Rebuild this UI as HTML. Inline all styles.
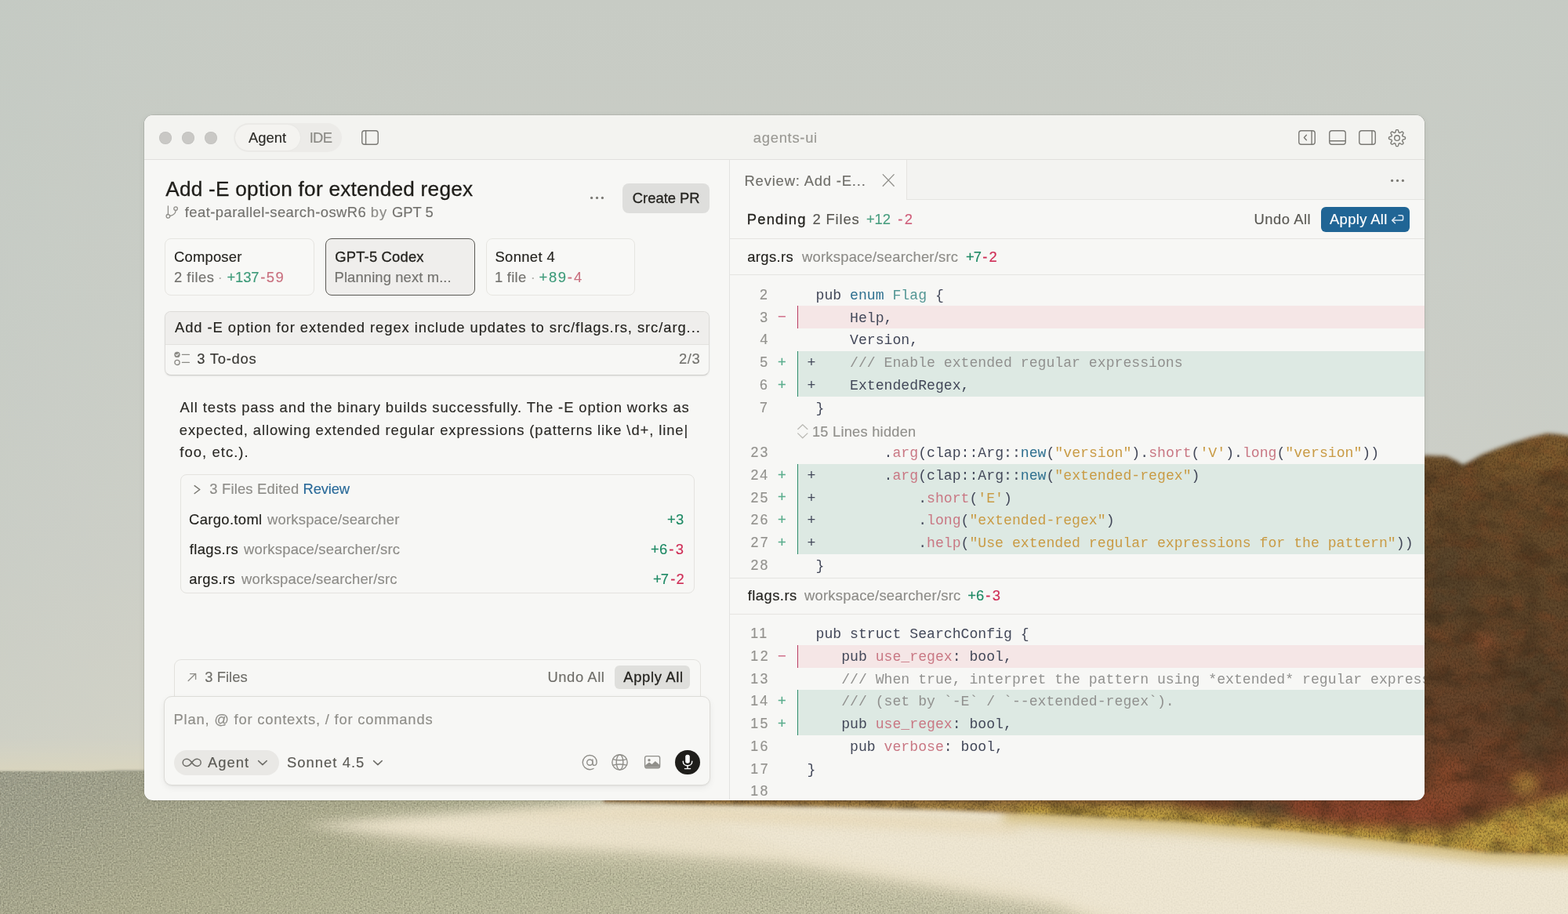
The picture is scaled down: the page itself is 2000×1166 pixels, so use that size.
<!DOCTYPE html>
<html lang="en">
<head>
<meta charset="utf-8">
<title>agents-ui</title>
<style>
html,body{margin:0;padding:0;}
body{width:2000px;height:1166px;overflow:hidden;position:relative;background:#cbcec7;font-family:'Liberation Sans', sans-serif;}
.bg{position:absolute;left:0;top:0;}
.shadow{position:absolute;left:184px;top:147px;width:1633px;height:873.6px;border-radius:11px;background:#f7f7f5;box-shadow:0 0 0 0.6px rgba(40,40,30,.22),0 2px 10px rgba(40,40,30,.07);}
.win{position:absolute;left:0;top:0;width:2000px;height:1166px;clip-path:inset(147px 183px 145.4px 184px round 11px);}
.b{position:absolute;box-sizing:border-box;}
.t{position:absolute;white-space:pre;line-height:24px;font-family:'Liberation Sans', sans-serif;-webkit-text-stroke:0.15px currentColor;}
.md{-webkit-text-stroke:0.3px currentColor;}
.ic{position:absolute;overflow:visible;}
.cl{position:absolute;left:0;width:2000px;height:28.75px;}
.cl pre{position:absolute;margin:0;top:0;font-family:'Liberation Mono', monospace;font-size:18.15px;line-height:28.75px;white-space:pre;color:#434859;}
.d{color:#434859;} .k{color:#2f7090;} .y{color:#539694;} .p{color:#c97884;} .s{color:#c99b45;} .c{color:#91918f;}
.add{background:#dde9e3;} .del{background:#f5e6e6;}
</style>
</head>
<body>


<svg class="bg" width="2000" height="1166" viewBox="0 0 2000 1166" aria-hidden="true">
  <defs>
    <linearGradient id="sky" x1="0" y1="0" x2="0" y2="1">
      <stop offset="0" stop-color="#c7cbc4"/>
      <stop offset="0.35" stop-color="#cbcec7"/>
      <stop offset="0.6" stop-color="#cfd0c8"/>
      <stop offset="0.78" stop-color="#d4d3c7"/>
      <stop offset="0.85" stop-color="#d8d5c6"/>
    </linearGradient>
    <linearGradient id="skyx" x1="0" y1="0" x2="1" y2="0">
      <stop offset="0" stop-color="#bfc8c2" stop-opacity="0.45"/>
      <stop offset="0.3" stop-color="#cdd0c8" stop-opacity="0"/>
      <stop offset="0.7" stop-color="#cdd0c8" stop-opacity="0"/>
      <stop offset="1" stop-color="#c3cac4" stop-opacity="0.4"/>
    </linearGradient>
    <linearGradient id="hz" x1="0" y1="0" x2="0" y2="1">
      <stop offset="0" stop-color="#d9d5c0" stop-opacity="0"/>
      <stop offset="1" stop-color="#dcd6bc" stop-opacity="0.8"/>
    </linearGradient>
    <linearGradient id="water" x1="0" y1="0" x2="1" y2="0.2">
      <stop offset="0" stop-color="#9c9e8e"/>
      <stop offset="0.1" stop-color="#a2a38f"/>
      <stop offset="0.25" stop-color="#b0af93"/>
      <stop offset="0.45" stop-color="#babA9d"/>
      <stop offset="0.7" stop-color="#c4c2a7"/>
      <stop offset="1" stop-color="#cdcab2"/>
    </linearGradient>
    <linearGradient id="fol" x1="0" y1="0" x2="0" y2="1">
      <stop offset="0" stop-color="#7d5c30"/>
      <stop offset="0.1" stop-color="#6c4f2c"/>
      <stop offset="0.4" stop-color="#5f472b"/>
      <stop offset="0.7" stop-color="#69442b"/>
      <stop offset="0.9" stop-color="#7b452c"/>
      <stop offset="1" stop-color="#84502f"/>
    </linearGradient>
    <filter color-interpolation-filters="sRGB" id="b1" x="-5%" y="-5%" width="110%" height="110%"><feGaussianBlur stdDeviation="0.8"/></filter>
    <filter color-interpolation-filters="sRGB" id="b3" x="-10%" y="-10%" width="120%" height="120%"><feGaussianBlur stdDeviation="2.5"/></filter>
    <filter color-interpolation-filters="sRGB" id="b8" x="-10%" y="-10%" width="120%" height="120%"><feGaussianBlur stdDeviation="7"/></filter>
    <filter color-interpolation-filters="sRGB" id="b16" x="-20%" y="-20%" width="140%" height="140%"><feGaussianBlur stdDeviation="14"/></filter>
    <filter color-interpolation-filters="sRGB" id="grain" x="0" y="0" width="100%" height="100%">
      <feTurbulence type="fractalNoise" baseFrequency="0.5" numOctaves="2" seed="7"/>
      <feColorMatrix type="matrix" values="0 0 0 0 0.3  0 0 0 0 0.29  0 0 0 0 0.22  1.2 1.2 0 0 -1.0"/>
    </filter>
    <filter color-interpolation-filters="sRGB" id="grain2" x="0" y="0" width="100%" height="100%">
      <feTurbulence type="fractalNoise" baseFrequency="0.5" numOctaves="2" seed="11"/>
      <feColorMatrix type="matrix" values="0 0 0 0 0.95  0 0 0 0 0.93  0 0 0 0 0.8  1.2 1.2 0 0 -1.05"/>
    </filter>
    <filter color-interpolation-filters="sRGB" id="blotch" x="0" y="0" width="100%" height="100%">
      <feTurbulence type="fractalNoise" baseFrequency="0.03 0.04" numOctaves="3" seed="3"/>
      <feColorMatrix type="matrix" values="0 0 0 0 0.2  0 0 0 0 0.15  0 0 0 0 0.09  1.9 1.9 0 0 -1.7"/>
    </filter>
    <filter color-interpolation-filters="sRGB" id="blotch2" x="0" y="0" width="100%" height="100%">
      <feTurbulence type="fractalNoise" baseFrequency="0.035 0.05" numOctaves="3" seed="21"/>
      <feColorMatrix type="matrix" values="0 0 0 0 0.6  0 0 0 0 0.27  0 0 0 0 0.13  0 1.9 1.9 0 -1.75"/>
    </filter>
    <filter color-interpolation-filters="sRGB" id="fgrain" x="0" y="0" width="100%" height="100%">
      <feTurbulence type="fractalNoise" baseFrequency="0.5 0.35" numOctaves="2" seed="5"/>
      <feColorMatrix type="matrix" values="0 0 0 0 0.2  0 0 0 0 0.13  0 0 0 0 0.07  1.4 1.4 0 0 -1.2"/>
    </filter>
    <mask id="folmask" maskUnits="userSpaceOnUse" x="700" y="500" width="1300" height="666"><g filter="url(#b3)"><path d="M1790 600 L1817 581 L1845 582 L1858 588 L1866 593 L1876 588 L1890 580 L1910 572 L1930 565 L1952 558 L1973 553 L1988 554 L2000 556 L2020 556 L2020 1092 L1900 1088 L1780 1074 L1650 1060 L1500 1048 L1350 1040 L1200 1033 L1050 1029 L900 1026 L770 1023 L770 1010 L1790 1010 Z" fill="#fff"/></g></mask>
    <clipPath id="folclip"><path d="M1790 600 L1817 581 L1845 582 L1858 588 L1866 593 L1876 588 L1890 580 L1910 572 L1930 565 L1952 558 L1973 553 L1988 554 L2000 556 L2020 556 L2020 1092 L1900 1088 L1780 1074 L1650 1060 L1500 1048 L1350 1040 L1200 1033 L1050 1029 L900 1026 L770 1023 L770 1010 L1790 1010 Z"/></clipPath>
    <clipPath id="lowclip"><path d="M0 984 H184 V1021 H1200 L1500 1050 L1800 1080 L2000 1095 V1166 H0 Z"/></clipPath>
  </defs>
  <rect width="2000" height="1166" fill="url(#sky)"/>
  <rect width="2000" height="1000" fill="url(#skyx)" opacity="0.7"/>
  <rect x="0" y="940" width="400" height="46" fill="url(#hz)"/>
  <!-- water -->
  <g filter="url(#b1)">
    <path d="M-20 983.6 L120 984 L150 982.6 L2020 983 L2020 1186 L-20 1186 Z" fill="url(#water)"/>
  </g>
  <g clip-path="url(#lowclip)">
    <rect x="0" y="980" width="2000" height="186" filter="url(#grain)" opacity="0.42"/>
    <rect x="0" y="980" width="2000" height="186" filter="url(#grain2)" opacity="0.5"/>
  </g>
  <!-- sand -->
  <g filter="url(#b16)">
    <path d="M420 1056 L600 1042 L780 1030 L2020 1030 L2020 1186 L1400 1186 L1330 1160 L1175 1136 L1000 1110 L800 1096 L650 1088 L500 1072 Z" fill="#e6dcc0" opacity="0.7"/>
  </g>
  <g filter="url(#b8)">
    <path d="M380 1053 L450 1048 L600 1037 L700 1030 L780 1023 L2020 1022 L2020 1186 L1430 1186 L1350 1154 L1175 1126 L1000 1098 L800 1084 L650 1077 L500 1064 Z" fill="#ece3cc"/>
    <path d="M900 1050 L1400 1070 L2020 1100 L2020 1186 L1500 1186 L1300 1130 L1000 1082 Z" fill="#efe7d3"/>
    <path d="M600 1040 L900 1030 L1300 1050 L1300 1062 L900 1046 Z" fill="#e8d3a8" opacity="0.4"/>
  </g>
  <g filter="url(#b8)" opacity="0.55"><rect x="700" y="900" width="1400" height="300" fill="none"/><path d="M1280 1036 L1350 1041 L1500 1049 L1650 1061 L1780 1075 L1900 1089 L2020 1093" stroke="#c8aa56" stroke-width="24" fill="none"/></g>
  <!-- foliage -->
  <g mask="url(#folmask)">
    <rect x="760" y="540" width="1240" height="570" fill="url(#fol)"/>
    <g filter="url(#b8)">
      <path d="M770 1018 L1000 1020 L1300 1022 L1500 1026 L1500 1046 L1300 1040 L1000 1032 L770 1027 Z" fill="#b7994c"/>
      <path d="M1300 1024 L1500 1030 L1700 1052 L1850 1058 L1930 1030 L2020 1010 L2020 1110 L1900 1102 L1780 1088 L1650 1074 L1500 1062 L1300 1052 Z" fill="#bf9f42"/>
      <path d="M1620 1014 L1820 1014 L1860 1036 L1800 1052 L1700 1046 L1640 1034 Z" fill="#94482f" opacity="0.8"/>
      <path d="M1560 1024 L1640 1024 L1650 1040 L1570 1038 Z" fill="#5d5336" opacity="0.8"/>
      <ellipse cx="1945" cy="1000" rx="18" ry="14" fill="#b8923f" opacity="0.7"/>
      <ellipse cx="1850" cy="1000" rx="30" ry="30" fill="#9a4f30" opacity="0.5"/>
      <ellipse cx="1895" cy="820" rx="14" ry="12" fill="#a5532f" opacity="0.5"/>
      <ellipse cx="1960" cy="900" rx="45" ry="70" fill="#4b3f2a" opacity="0.5"/>
      <ellipse cx="1850" cy="740" rx="30" ry="50" fill="#4d412c" opacity="0.4"/>
      <path d="M1880 583 L1930 568 L2000 558 L2000 600 L1890 610 Z" fill="#8a6532" opacity="0.5"/>
    </g>
    <rect x="770" y="540" width="1230" height="570" filter="url(#blotch)" opacity="0.4"/>
    <rect x="1560" y="540" width="440" height="570" filter="url(#blotch2)" opacity="0.22"/>
    <rect x="770" y="540" width="1230" height="570" filter="url(#fgrain)" opacity="0.55"/>
  </g>
  <g clip-path="url(#lowclip)">
    <rect x="0" y="980" width="2000" height="186" filter="url(#grain)" opacity="0.08"/>
  </g>
</svg>

<div class="shadow"></div>
<div class="win">

<header>
<div class="b" style="left:184px;top:147px;width:1633.00px;height:57.00px;background:#f3f3f0;border-bottom:1px solid #e1e0dd;"></div>
<div class="b" style="left:203px;top:167.6px;width:16.00px;height:16.00px;border-radius:50%;background:#c9c8c5;box-shadow:inset 0 0 0 0.5px rgba(0,0,0,.08);"></div>
<div class="b" style="left:232px;top:167.6px;width:16.00px;height:16.00px;border-radius:50%;background:#c9c8c5;box-shadow:inset 0 0 0 0.5px rgba(0,0,0,.08);"></div>
<div class="b" style="left:261px;top:167.6px;width:16.00px;height:16.00px;border-radius:50%;background:#c9c8c5;box-shadow:inset 0 0 0 0.5px rgba(0,0,0,.08);"></div>
<div class="b" style="left:298px;top:157px;width:138.00px;height:37.00px;border-radius:19px;background:#ecebe8;"></div>
<div class="b" style="left:300px;top:159px;width:83.00px;height:33.00px;border-radius:17px;background:#f4f3f0;box-shadow:0 0 2px rgba(0,0,0,.06);"></div>
<svg class="ic" style="left:460px;top:165px" width="24" height="21" viewBox="0 0 24 21" fill="none" stroke="#7a7974" stroke-width="1.4" stroke-linecap="round" stroke-linejoin="round" ><rect x="1.75" y="1.75" width="20.5" height="17.5" rx="3.2"/><path d="M6.6 2v17"/></svg>
<svg class="ic" style="left:1655px;top:165px" width="24" height="21" viewBox="0 0 24 21" fill="none" stroke="#7a7974" stroke-width="1.4" stroke-linecap="round" stroke-linejoin="round" ><rect x="1.75" y="1.75" width="20.5" height="17.5" rx="3.2"/><path d="M18.1 2v17"/><path d="M11.4 7.2 8.4 10.5l3 3.3"/></svg>
<svg class="ic" style="left:1693.5px;top:165px" width="24" height="21" viewBox="0 0 24 21" fill="none" stroke="#7a7974" stroke-width="1.4" stroke-linecap="round" stroke-linejoin="round" ><rect x="1.75" y="1.75" width="20.5" height="17.5" rx="3.2"/><path d="M2 14.8h20"/></svg>
<svg class="ic" style="left:1732px;top:165px" width="24" height="21" viewBox="0 0 24 21" fill="none" stroke="#7a7974" stroke-width="1.4" stroke-linecap="round" stroke-linejoin="round" ><rect x="1.75" y="1.75" width="20.5" height="17.5" rx="3.2"/><path d="M18 2v17"/></svg>
<svg class="ic" style="left:1770.4px;top:163.8px" width="24" height="24" viewBox="0 0 24 24" fill="none" stroke="#7a7974" stroke-width="1.4" stroke-linecap="round" stroke-linejoin="round" ><path d="M12.00 1.60 L12.34 1.61 L12.69 1.62 L13.02 1.72 L13.30 2.19 L13.55 2.74 L13.75 3.32 L13.91 3.91 L14.05 4.47 L14.17 4.95 L14.38 5.09 L14.61 5.17 L14.83 5.26 L15.05 5.36 L15.27 5.46 L15.52 5.51 L15.95 5.26 L16.44 4.96 L16.97 4.66 L17.53 4.38 L18.09 4.17 L18.62 4.04 L18.92 4.21 L19.18 4.44 L19.42 4.68 L19.66 4.92 L19.89 5.18 L20.06 5.48 L19.93 6.01 L19.72 6.57 L19.44 7.13 L19.14 7.66 L18.84 8.15 L18.59 8.58 L18.64 8.83 L18.74 9.05 L18.84 9.27 L18.93 9.49 L19.01 9.72 L19.15 9.93 L19.63 10.05 L20.19 10.19 L20.78 10.35 L21.36 10.55 L21.91 10.80 L22.38 11.08 L22.48 11.41 L22.49 11.76 L22.50 12.10 L22.49 12.44 L22.48 12.79 L22.38 13.12 L21.91 13.40 L21.36 13.65 L20.78 13.85 L20.19 14.01 L19.63 14.15 L19.15 14.27 L19.01 14.48 L18.93 14.71 L18.84 14.93 L18.74 15.15 L18.64 15.37 L18.59 15.62 L18.84 16.05 L19.14 16.54 L19.44 17.07 L19.72 17.63 L19.93 18.19 L20.06 18.72 L19.89 19.02 L19.66 19.28 L19.42 19.52 L19.18 19.76 L18.92 19.99 L18.62 20.16 L18.09 20.03 L17.53 19.82 L16.97 19.54 L16.44 19.24 L15.95 18.94 L15.52 18.69 L15.27 18.74 L15.05 18.84 L14.83 18.94 L14.61 19.03 L14.38 19.11 L14.17 19.25 L14.05 19.73 L13.91 20.29 L13.75 20.88 L13.55 21.46 L13.30 22.01 L13.02 22.48 L12.69 22.58 L12.34 22.59 L12.00 22.60 L11.66 22.59 L11.31 22.58 L10.98 22.48 L10.70 22.01 L10.45 21.46 L10.25 20.88 L10.09 20.29 L9.95 19.73 L9.83 19.25 L9.62 19.11 L9.39 19.03 L9.17 18.94 L8.95 18.84 L8.73 18.74 L8.48 18.69 L8.05 18.94 L7.56 19.24 L7.03 19.54 L6.47 19.82 L5.91 20.03 L5.38 20.16 L5.08 19.99 L4.82 19.76 L4.58 19.52 L4.34 19.28 L4.11 19.02 L3.94 18.72 L4.07 18.19 L4.28 17.63 L4.56 17.07 L4.86 16.54 L5.16 16.05 L5.41 15.62 L5.36 15.37 L5.26 15.15 L5.16 14.93 L5.07 14.71 L4.99 14.48 L4.85 14.27 L4.37 14.15 L3.81 14.01 L3.22 13.85 L2.64 13.65 L2.09 13.40 L1.62 13.12 L1.52 12.79 L1.51 12.44 L1.50 12.10 L1.51 11.76 L1.52 11.41 L1.62 11.08 L2.09 10.80 L2.64 10.55 L3.22 10.35 L3.81 10.19 L4.37 10.05 L4.85 9.93 L4.99 9.72 L5.07 9.49 L5.16 9.27 L5.26 9.05 L5.36 8.83 L5.41 8.58 L5.16 8.15 L4.86 7.66 L4.56 7.13 L4.28 6.57 L4.07 6.01 L3.94 5.48 L4.11 5.18 L4.34 4.92 L4.58 4.68 L4.82 4.44 L5.08 4.21 L5.38 4.04 L5.91 4.17 L6.47 4.38 L7.03 4.66 L7.56 4.96 L8.05 5.26 L8.48 5.51 L8.73 5.46 L8.95 5.36 L9.17 5.26 L9.39 5.17 L9.62 5.09 L9.83 4.95 L9.95 4.47 L10.09 3.91 L10.25 3.32 L10.45 2.74 L10.70 2.19 L10.98 1.72 L11.31 1.62 L11.66 1.61Z"/><circle cx="12" cy="12.1" r="3.3"/></svg>
<span class="t" style="left:317.00px;top:164.40px;font-size:18.4px;letter-spacing:0.000px;color:#2b2a26;">Agent</span>
<span class="t" style="left:394.65px;top:164.40px;font-size:18.4px;letter-spacing:-0.700px;color:#8a8984;">IDE</span>
<span class="t" style="left:960.85px;top:164.20px;font-size:18.4px;letter-spacing:0.706px;color:#9a9994;">agents-ui</span>
</header>

<main>
<div class="b" style="left:184px;top:204px;width:746.00px;height:816.00px;background:#f7f7f5;"></div>
<div class="b" style="left:930px;top:204px;width:1.00px;height:816.00px;background:#e3e3e0;"></div>
<svg class="ic" style="left:210px;top:262px" width="18" height="18" viewBox="0 0 18 18" fill="none" stroke="#908f8a" stroke-width="1.3" stroke-linecap="round" stroke-linejoin="round" ><circle cx="4.4" cy="13.8" r="2.3"/><circle cx="14.1" cy="4.1" r="2.3"/><path d="M4.4 11.4V0.8"/><path d="M14.1 6.500C14.1 10.600 10 12.800 6.700 13.500"/></svg>
<svg class="ic" style="left:752px;top:250px" width="20" height="5" viewBox="0 0 20 5" fill="#7a7974" stroke="none" stroke-width="1.5" stroke-linecap="round" stroke-linejoin="round" ><circle cx="2.6" cy="2.4" r="1.6"/><circle cx="9.5" cy="2.4" r="1.6"/><circle cx="16.4" cy="2.4" r="1.6"/></svg>
<div class="b" style="left:794px;top:234px;width:111.00px;height:37.60px;border-radius:8px;background:#dededc;"></div>
<div class="b" style="left:210.4px;top:304.4px;width:190.20px;height:72.20px;border-radius:8px;border:1px solid #e6e5e1;background:#f8f8f6;"></div>
<div class="b" style="left:415px;top:304.2px;width:191.00px;height:72.60px;border-radius:8px;border:1.5px solid #5a5954;background:#efeeec;"></div>
<div class="b" style="left:619.6px;top:304.4px;width:190.80px;height:72.20px;border-radius:8px;border:1px solid #e6e5e1;background:#f8f8f6;"></div>
<div class="b" style="left:210px;top:397px;width:695.00px;height:82.40px;border-radius:8px;border:1px solid #dcdbd8;border-bottom-color:#cfcecb;background:#f7f7f5;box-shadow:0 1px 2px rgba(0,0,0,.08);overflow:hidden;"><div style="position:absolute;left:0;top:0;right:0;height:41px;background:#efeeec;border-bottom:1px solid #e3e2de"></div></div>
<svg class="ic" style="left:221px;top:447px" width="22" height="20" viewBox="0 0 22 20" fill="none" stroke="#8c8b86" stroke-width="1.3" stroke-linecap="round" stroke-linejoin="round" ><circle cx="5" cy="5.4" r="3.7" fill="#8c8b86" stroke="none"/><path d="M3.4 5.5l1.2 1.2 2-2.4" stroke="#f7f7f5" stroke-width="1.1"/><path d="M11.4 5.4h9"/><circle cx="5" cy="15.4" r="3.1"/><path d="M11.4 15.4h9"/></svg>
<div class="b" style="left:229.6px;top:605.4px;width:656.00px;height:151.80px;border-radius:8px;border:1px solid #e4e3df;"></div>
<svg class="ic" style="left:245px;top:616px" width="12" height="16" viewBox="0 0 12 16" fill="none" stroke="#77766f" stroke-width="1.5" stroke-linecap="round" stroke-linejoin="round" ><path d="M3.2 3.6l6.6 4.9-6.6 5"/></svg>
<div class="b" style="left:221.6px;top:840.6px;width:672.00px;height:59.40px;border-radius:9px 9px 0 0;border:1px solid #e2e1dd;border-bottom:none;background:#f7f7f5;"></div>
<svg class="ic" style="left:238px;top:857px" width="14" height="14" viewBox="0 0 14 14" fill="none" stroke="#908f8a" stroke-width="1.4" stroke-linecap="round" stroke-linejoin="round" ><path d="M2.2 11.6l9.2-9"/><path d="M4.6 2.6h7v7"/></svg>
<div class="b" style="left:784px;top:848.6px;width:95.60px;height:30.40px;border-radius:6px;background:#dfdfdc;"></div>
<div class="b" style="left:209px;top:888.4px;width:697.00px;height:113.60px;border-radius:10px;border:1px solid #dddcd8;background:#f7f7f5;box-shadow:0 3px 9px rgba(0,0,0,.06),0 1px 2px rgba(0,0,0,.05);"></div>
<div class="b" style="left:222.4px;top:957px;width:134.00px;height:31.60px;border-radius:16px;background:#e9e8e5;"></div>
<svg class="ic" style="left:231px;top:965px" width="28" height="16" viewBox="0 0 28 16" fill="none" stroke="#6f6e69" stroke-width="1.5" stroke-linecap="round" stroke-linejoin="round" ><path d="M13.7 7.8c-2-2.9-3.9-4.6-6.7-4.6-2.7 0-4.8 2-4.8 4.6s2.100 4.600 4.800 4.600c2.800 0 4.700-1.700 6.700-4.600zm0 0c2-2.900 3.900-4.600 6.700-4.600 2.700 0 4.800 2 4.800 4.600s-2.100 4.600-4.800 4.600c-2.800 0-4.700-1.700-6.700-4.600z"/></svg>
<svg class="ic" style="left:328px;top:968px" width="14" height="10" viewBox="0 0 14 10" fill="none" stroke="#6f6e69" stroke-width="1.5" stroke-linecap="round" stroke-linejoin="round" ><path d="M1.6 2.6l5.300 5 5.300-5"/></svg>
<svg class="ic" style="left:475px;top:968px" width="14" height="10" viewBox="0 0 14 10" fill="none" stroke="#6f6e69" stroke-width="1.5" stroke-linecap="round" stroke-linejoin="round" ><path d="M1.6 2.6l5.300 5 5.300-5"/></svg>
<svg class="ic" style="left:741px;top:961px" width="23" height="23" viewBox="0 0 23 23" fill="none" stroke="#908f8a" stroke-width="1.4" stroke-linecap="round" stroke-linejoin="round" ><circle cx="11.3" cy="11.6" r="3.6"/><path d="M14.9 8v5c0 1.500.900 2.400 2.200 2.400 1.700 0 3-1.600 3-4.100 0-5.100-3.700-8.800-8.800-8.800s-9.100 4-9.100 9.100 4 9.100 9.100 9.100c1.800 0 3.300-.4 4.700-1.200"/></svg>
<svg class="ic" style="left:779px;top:961px" width="23" height="23" viewBox="0 0 23 23" fill="none" stroke="#908f8a" stroke-width="1.4" stroke-linecap="round" stroke-linejoin="round" ><circle cx="11.500" cy="11.400" r="9.700"/><ellipse cx="11.500" cy="11.400" rx="4.300" ry="9.700"/><path d="M2.800 7.600Q11.500 10 20.200 7.600M2.800 15.200Q11.500 12.800 20.200 15.200"/></svg>
<svg class="ic" style="left:820.6px;top:962.6px" width="23" height="19" viewBox="0 0 23 19" fill="none" stroke="#908f8a" stroke-width="1.4" stroke-linecap="round" stroke-linejoin="round" ><rect x="1.600" y="1.600" width="19" height="15.200" rx="2.200"/><circle cx="7" cy="6.800" r="1.700" fill="#908f8a" stroke="none"/><path d="M2.200 15.800v-2.600l4.800-3.600 3.600 2.400 4.200-4 5.200 4.400v3.400z" fill="#908f8a" stroke="none"/></svg>
<div class="b" style="left:861.3px;top:956.5px;width:31.50px;height:31.50px;border-radius:50%;background:#1f1e1b;"></div>
<svg class="ic" style="left:866.8px;top:961.4px" width="20" height="22" viewBox="0 0 20 22" fill="none" stroke="#ffffff" stroke-width="1.4" stroke-linecap="round" stroke-linejoin="round" ><rect x="7.200" y="1.800" width="5.600" height="11" rx="2.800" fill="#fff" stroke="none"/><path d="M4.200 10.200c0 3.400 2.500 5.600 5.800 5.600s5.800-2.200 5.800-5.600"/><path d="M10 16v3.400M6.400 19.600h7.200"/></svg>
<span class="t md" style="left:211.25px;top:228.60px;font-size:26.2px;letter-spacing:0.242px;color:#1f1e1a;">Add -E option for extended regex</span>
<span class="t" style="left:235.75px;top:259.00px;font-size:18.4px;letter-spacing:0.450px;color:#73726e;">feat-parallel-search-oswR6</span>
<span class="t" style="left:472.75px;top:259.00px;font-size:18.4px;letter-spacing:1.000px;color:#8d8c88;">by</span>
<span class="t" style="left:500.00px;top:259.00px;font-size:18.4px;letter-spacing:0.000px;color:#73726e;">GPT 5</span>
<span class="t md" style="left:806.85px;top:241.00px;font-size:18.4px;letter-spacing:-0.013px;color:#24231f;">Create PR</span>
<span class="t" style="left:222.00px;top:316.00px;font-size:18.4px;letter-spacing:0.214px;color:#24231f;">Composer</span>
<span class="t" style="left:222.00px;top:341.60px;font-size:18.4px;letter-spacing:0.483px;color:#73726e;">2 files</span>
<span class="t" style="left:277.75px;top:341.60px;font-size:18.4px;letter-spacing:0.000px;color:#b5b4af;">·</span>
<span class="t" style="left:289.40px;top:341.60px;font-size:18.4px;letter-spacing:-0.100px;color:#3d9a79;">+137</span>
<span class="t" style="left:332.25px;top:341.60px;font-size:18.4px;letter-spacing:1.500px;color:#c9707f;">-59</span>
<span class="t md" style="left:427.25px;top:316.00px;font-size:18.4px;letter-spacing:0.185px;color:#24231f;">GPT-5 Codex</span>
<span class="t" style="left:426.50px;top:341.60px;font-size:18.4px;letter-spacing:0.118px;color:#73726e;">Planning next m...</span>
<span class="t" style="left:631.40px;top:316.00px;font-size:18.4px;letter-spacing:0.371px;color:#24231f;">Sonnet 4</span>
<span class="t" style="left:630.90px;top:341.60px;font-size:18.4px;letter-spacing:0.300px;color:#73726e;">1 file</span>
<span class="t" style="left:676.75px;top:341.60px;font-size:18.4px;letter-spacing:0.000px;color:#b5b4af;">·</span>
<span class="t" style="left:687.60px;top:341.60px;font-size:18.4px;letter-spacing:1.575px;color:#3d9a79;">+89</span>
<span class="t" style="left:723.65px;top:341.60px;font-size:18.4px;letter-spacing:2.200px;color:#c9707f;">-4</span>
<span class="t" style="left:223.00px;top:405.60px;font-size:18.4px;letter-spacing:0.930px;color:#24231f;">Add -E option for extended regex include updates to src/flags.rs, src/arg...</span>
<span class="t" style="left:251.25px;top:446.00px;font-size:18.4px;letter-spacing:0.750px;color:#3a3935;">3 To-dos</span>
<span class="t" style="left:866.00px;top:446.00px;font-size:18.4px;letter-spacing:0.625px;color:#73726e;">2/3</span>
<span class="t" style="left:229.60px;top:508.00px;font-size:18.4px;letter-spacing:0.905px;color:#2b2a26;">All tests pass and the binary builds successfully. The -E option works as</span>
<span class="t" style="left:228.85px;top:536.50px;font-size:18.4px;letter-spacing:0.910px;color:#2b2a26;">expected, allowing extended regular expressions (patterns like \d+, line|</span>
<span class="t" style="left:229.35px;top:565.00px;font-size:18.4px;letter-spacing:1.065px;color:#2b2a26;">foo, etc.).</span>
<span class="t" style="left:267.25px;top:612.00px;font-size:18.4px;letter-spacing:0.192px;color:#8d8c88;">3 Files Edited</span>
<span class="t" style="left:386.50px;top:612.00px;font-size:18.4px;letter-spacing:-0.150px;color:#2a6a99;">Review</span>
<span class="t" style="left:241.00px;top:651.00px;font-size:18.4px;letter-spacing:0.361px;color:#24231f;">Cargo.toml</span>
<span class="t" style="left:341.00px;top:651.00px;font-size:18.4px;letter-spacing:0.221px;color:#8d8c88;">workspace/searcher</span>
<span class="t" style="left:851.00px;top:651.00px;font-size:18.4px;letter-spacing:0.350px;color:#1f8a65;">+3</span>
<span class="t" style="left:241.75px;top:689.00px;font-size:18.4px;letter-spacing:0.393px;color:#24231f;">flags.rs</span>
<span class="t" style="left:311.00px;top:689.00px;font-size:18.4px;letter-spacing:0.231px;color:#8d8c88;">workspace/searcher/src</span>
<span class="t" style="left:830.00px;top:689.00px;font-size:18.4px;letter-spacing:0.150px;color:#1f8a65;">+6</span>
<span class="t" style="left:853.25px;top:689.00px;font-size:18.4px;letter-spacing:2.500px;color:#cf2d56;">-3</span>
<span class="t" style="left:241.25px;top:727.00px;font-size:18.4px;letter-spacing:0.375px;color:#24231f;">args.rs</span>
<span class="t" style="left:308.00px;top:727.00px;font-size:18.4px;letter-spacing:0.202px;color:#8d8c88;">workspace/searcher/src</span>
<span class="t" style="left:833.00px;top:727.00px;font-size:18.4px;letter-spacing:-1.000px;color:#1f8a65;">+7</span>
<span class="t" style="left:855.25px;top:727.00px;font-size:18.4px;letter-spacing:1.250px;color:#cf2d56;">-2</span>
<span class="t" style="left:261.25px;top:852.00px;font-size:18.4px;letter-spacing:0.042px;color:#6f6e69;">3 Files</span>
<span class="t" style="left:698.50px;top:852.00px;font-size:18.4px;letter-spacing:0.550px;color:#6f6e69;">Undo All</span>
<span class="t md" style="left:795.25px;top:852.00px;font-size:18.4px;letter-spacing:0.656px;color:#24231f;">Apply All</span>
<span class="t" style="left:221.50px;top:905.60px;font-size:18.4px;letter-spacing:0.779px;color:#8f8e89;">Plan, @ for contexts, / for commands</span>
<span class="t" style="left:265.00px;top:961.00px;font-size:18.4px;letter-spacing:1.000px;color:#5a5954;">Agent</span>
<span class="t" style="left:366.00px;top:961.00px;font-size:18.4px;letter-spacing:1.039px;color:#5a5954;">Sonnet 4.5</span>
</main>

<section>
<div class="b" style="left:931px;top:204px;width:886.00px;height:816.00px;background:#f7f7f5;"></div>
<div class="b" style="left:931px;top:204px;width:886.00px;height:51.00px;background:#f3f3f1;border-bottom:1px solid #e5e4e1;"></div>
<div class="b" style="left:931px;top:204px;width:225.60px;height:51.00px;background:#f7f7f5;border-right:1px solid #e5e4e1;"></div>
<svg class="ic" style="left:1124px;top:221px" width="18" height="18" viewBox="0 0 18 18" fill="none" stroke="#908f8a" stroke-width="1.3" stroke-linecap="round" stroke-linejoin="round" ><path d="M2.200 1.600l14 14.600M16.200 1.600l-14 14.600"/></svg>
<svg class="ic" style="left:1772.6px;top:228px" width="20" height="5" viewBox="0 0 20 5" fill="#7a7974" stroke="none" stroke-width="1.5" stroke-linecap="round" stroke-linejoin="round" ><circle cx="2.600" cy="2.400" r="1.600"/><circle cx="9.500" cy="2.400" r="1.600"/><circle cx="16.400" cy="2.400" r="1.600"/></svg>
<div class="b" style="left:931px;top:304px;width:886.00px;height:1.00px;background:#e5e4e1;"></div>
<div class="b" style="left:1685px;top:264px;width:113.40px;height:31.60px;border-radius:6px;background:#206595;"></div>
<svg class="ic" style="left:1774px;top:272px" width="18" height="16" viewBox="0 0 18 16" fill="none" stroke="#d8e6f2" stroke-width="1.5" stroke-linecap="round" stroke-linejoin="round" ><path d="M10 2.700H13.800Q15.600 2.700 15.600 4.500V7.300Q15.600 9.100 13.800 9.100H2"/><path d="M5.500 5.400L1.800 9.100l3.700 3.700"/></svg>
<div class="b" style="left:931px;top:350px;width:886.00px;height:1.00px;background:#e5e4e1;"></div>
<div class="b" style="left:931px;top:736.6px;width:886.00px;height:1.00px;background:#e5e4e1;"></div>
<div class="b" style="left:931px;top:782.6px;width:886.00px;height:1.00px;background:#e5e4e1;"></div>
<svg class="ic" style="left:1016px;top:541px" width="16" height="20" viewBox="0 0 16 20" fill="none" stroke="#bab9b4" stroke-width="1.3" stroke-linecap="round" stroke-linejoin="round" ><path d="M1.700 6.400L7.750 0.800L13.900 6.400M1.700 11.900L7.750 17.700L13.900 11.900"/></svg>
<div class="cl" style="top:362.80px"><pre style="left:1029.62px"><span class="d"> pub </span><span class="k">enum </span><span class="y">Flag</span><span class="d"> {</span></pre></div>
<div class="b del" style="left:1017.4px;top:390.35px;width:800px;height:29.05px;border-left:1.7px solid #b93c61"></div>
<div class="cl" style="top:391.55px"><pre style="left:1029.62px"><span class="d">     Help,</span></pre></div>
<div class="cl" style="top:420.30px"><pre style="left:1029.62px"><span class="d">     Version,</span></pre></div>
<div class="b add" style="left:1017.4px;top:447.85px;width:800px;height:29.05px;border-left:1.7px solid #2c8c69"></div>
<div class="cl" style="top:449.05px"><pre style="left:1029.62px"><span class="d">+</span><span class="c">    /// Enable extended regular expressions</span></pre></div>
<div class="b add" style="left:1017.4px;top:476.60px;width:800px;height:29.05px;border-left:1.7px solid #2c8c69"></div>
<div class="cl" style="top:477.80px"><pre style="left:1029.62px"><span class="d">+    ExtendedRegex,</span></pre></div>
<div class="cl" style="top:506.55px"><pre style="left:1029.62px"><span class="d"> }</span></pre></div>
<div class="cl" style="top:564.05px"><pre style="left:1029.62px"><span class="d">         .</span><span class="p">arg</span><span class="d">(clap::Arg::</span><span class="k">new</span><span class="d">(</span><span class="s">&quot;version&quot;</span><span class="d">).</span><span class="p">short</span><span class="d">(</span><span class="s">&#x27;V&#x27;</span><span class="d">).</span><span class="p">long</span><span class="d">(</span><span class="s">&quot;version&quot;</span><span class="d">))</span></pre></div>
<div class="b add" style="left:1017.4px;top:591.60px;width:800px;height:29.05px;border-left:1.7px solid #2c8c69"></div>
<div class="cl" style="top:592.80px"><pre style="left:1029.62px"><span class="d">+        .</span><span class="p">arg</span><span class="d">(clap::Arg::</span><span class="k">new</span><span class="d">(</span><span class="s">&quot;extended-regex&quot;</span><span class="d">)</span></pre></div>
<div class="b add" style="left:1017.4px;top:620.35px;width:800px;height:29.05px;border-left:1.7px solid #2c8c69"></div>
<div class="cl" style="top:621.55px"><pre style="left:1029.62px"><span class="d">+            .</span><span class="p">short</span><span class="d">(</span><span class="s">&#x27;E&#x27;</span><span class="d">)</span></pre></div>
<div class="b add" style="left:1017.4px;top:649.10px;width:800px;height:29.05px;border-left:1.7px solid #2c8c69"></div>
<div class="cl" style="top:650.30px"><pre style="left:1029.62px"><span class="d">+            .</span><span class="p">long</span><span class="d">(</span><span class="s">&quot;extended-regex&quot;</span><span class="d">)</span></pre></div>
<div class="b add" style="left:1017.4px;top:677.85px;width:800px;height:29.05px;border-left:1.7px solid #2c8c69"></div>
<div class="cl" style="top:679.05px"><pre style="left:1029.62px"><span class="d">+            .</span><span class="p">help</span><span class="d">(</span><span class="s">&quot;Use extended regular expressions for the pattern&quot;</span><span class="d">))</span></pre></div>
<div class="cl" style="top:707.80px"><pre style="left:1029.62px"><span class="d"> }</span></pre></div>
<div class="cl" style="top:795.20px"><pre style="left:1029.62px"><span class="d"> pub struct SearchConfig {</span></pre></div>
<div class="b del" style="left:1017.4px;top:822.75px;width:800px;height:29.05px;border-left:1.7px solid #b93c61"></div>
<div class="cl" style="top:823.95px"><pre style="left:1029.62px"><span class="d">    pub </span><span class="p">use_regex</span><span class="d">: bool,</span></pre></div>
<div class="cl" style="top:852.70px"><pre style="left:1029.62px"><span class="c">    /// When true, interpret the pattern using *extended* regular expressions</span></pre></div>
<div class="b add" style="left:1017.4px;top:880.25px;width:800px;height:29.05px;border-left:1.7px solid #2c8c69"></div>
<div class="cl" style="top:881.45px"><pre style="left:1029.62px"><span class="c">    /// (set by `-E` / `--extended-regex`).</span></pre></div>
<div class="b add" style="left:1017.4px;top:909.00px;width:800px;height:29.05px;border-left:1.7px solid #2c8c69"></div>
<div class="cl" style="top:910.20px"><pre style="left:1029.62px"><span class="d">    pub </span><span class="p">use_regex</span><span class="d">: bool,</span></pre></div>
<div class="cl" style="top:938.95px"><pre style="left:1029.62px"><span class="d">     pub </span><span class="p">verbose</span><span class="d">: bool,</span></pre></div>
<div class="cl" style="top:967.70px"><pre style="left:1029.62px"><span class="d">}</span></pre></div>
<span class="t" style="left:949.50px;top:219.00px;font-size:18.4px;letter-spacing:0.828px;color:#6f6e69;">Review: Add -E...</span>
<span class="t md" style="left:952.75px;top:268.00px;font-size:18.4px;letter-spacing:1.192px;color:#24231f;">Pending</span>
<span class="t" style="left:1036.60px;top:268.00px;font-size:18.4px;letter-spacing:0.817px;color:#5a5954;">2 Files</span>
<span class="t" style="left:1105.00px;top:268.00px;font-size:18.4px;letter-spacing:-0.125px;color:#4a9f80;">+12</span>
<span class="t" style="left:1145.25px;top:268.00px;font-size:18.4px;letter-spacing:2.500px;color:#cf5f7b;">-2</span>
<span class="t" style="left:1599.50px;top:268.00px;font-size:18.4px;letter-spacing:0.521px;color:#5a5954;">Undo All</span>
<span class="t" style="left:1696.00px;top:268.00px;font-size:18.4px;letter-spacing:0.344px;color:#ffffff;">Apply All</span>
<span class="t" style="left:953.25px;top:315.60px;font-size:18.4px;letter-spacing:0.375px;color:#24231f;">args.rs</span>
<span class="t" style="left:1023.00px;top:315.60px;font-size:18.4px;letter-spacing:0.231px;color:#8d8c88;">workspace/searcher/src</span>
<span class="t" style="left:1232.00px;top:315.60px;font-size:18.4px;letter-spacing:-1.000px;color:#1f8a65;">+7</span>
<span class="t" style="left:1253.25px;top:315.60px;font-size:18.4px;letter-spacing:2.250px;color:#cf2d56;">-2</span>
<span class="t" style="left:953.75px;top:748.00px;font-size:18.4px;letter-spacing:0.450px;color:#24231f;">flags.rs</span>
<span class="t" style="left:1026.00px;top:748.00px;font-size:18.4px;letter-spacing:0.240px;color:#8d8c88;">workspace/searcher/src</span>
<span class="t" style="left:1234.30px;top:748.00px;font-size:18.4px;letter-spacing:-0.050px;color:#1f8a65;">+6</span>
<span class="t" style="left:1257.25px;top:748.00px;font-size:18.4px;letter-spacing:2.500px;color:#cf2d56;">-3</span>
<span class="t" style="left:1035.90px;top:538.70px;font-size:18.2px;letter-spacing:0.275px;color:#91908c;">15 Lines hidden</span>
<span class="t" style="left:968.90px;top:363.80px;font-size:17.8px;letter-spacing:0.000px;color:#93928e;">2</span>
<span class="t" style="left:969.15px;top:392.55px;font-size:17.8px;letter-spacing:0.000px;color:#93928e;">3</span>
<span class="t" style="left:992.00px;top:392.35px;font-size:18.4px;letter-spacing:0.000px;color:#d0708a;">−</span>
<span class="t" style="left:969.40px;top:421.30px;font-size:17.8px;letter-spacing:0.000px;color:#93928e;">4</span>
<span class="t" style="left:969.15px;top:450.05px;font-size:17.8px;letter-spacing:0.000px;color:#93928e;">5</span>
<span class="t" style="left:992.00px;top:449.85px;font-size:18.4px;letter-spacing:0.000px;color:#5aad8d;">+</span>
<span class="t" style="left:968.90px;top:478.80px;font-size:17.8px;letter-spacing:0.000px;color:#93928e;">6</span>
<span class="t" style="left:992.00px;top:478.60px;font-size:18.4px;letter-spacing:0.000px;color:#5aad8d;">+</span>
<span class="t" style="left:968.90px;top:507.55px;font-size:17.8px;letter-spacing:0.000px;color:#93928e;">7</span>
<span class="t" style="left:957.50px;top:565.05px;font-size:17.8px;letter-spacing:2.000px;color:#93928e;">23</span>
<span class="t" style="left:957.50px;top:593.80px;font-size:17.8px;letter-spacing:1.750px;color:#93928e;">24</span>
<span class="t" style="left:992.00px;top:593.60px;font-size:18.4px;letter-spacing:0.000px;color:#5aad8d;">+</span>
<span class="t" style="left:957.50px;top:622.55px;font-size:17.8px;letter-spacing:2.000px;color:#93928e;">25</span>
<span class="t" style="left:992.00px;top:622.35px;font-size:18.4px;letter-spacing:0.000px;color:#5aad8d;">+</span>
<span class="t" style="left:957.50px;top:651.30px;font-size:17.8px;letter-spacing:2.000px;color:#93928e;">26</span>
<span class="t" style="left:992.00px;top:651.10px;font-size:18.4px;letter-spacing:0.000px;color:#5aad8d;">+</span>
<span class="t" style="left:957.50px;top:680.05px;font-size:17.8px;letter-spacing:2.250px;color:#93928e;">27</span>
<span class="t" style="left:992.00px;top:679.85px;font-size:18.4px;letter-spacing:0.000px;color:#5aad8d;">+</span>
<span class="t" style="left:957.50px;top:708.80px;font-size:17.8px;letter-spacing:2.000px;color:#93928e;">28</span>
<span class="t" style="left:957.25px;top:796.20px;font-size:17.8px;letter-spacing:2.500px;color:#93928e;">11</span>
<span class="t" style="left:957.25px;top:824.95px;font-size:17.8px;letter-spacing:2.500px;color:#93928e;">12</span>
<span class="t" style="left:992.00px;top:824.75px;font-size:18.4px;letter-spacing:0.000px;color:#d0708a;">−</span>
<span class="t" style="left:957.25px;top:853.70px;font-size:17.8px;letter-spacing:2.250px;color:#93928e;">13</span>
<span class="t" style="left:957.25px;top:882.45px;font-size:17.8px;letter-spacing:2.000px;color:#93928e;">14</span>
<span class="t" style="left:992.00px;top:882.25px;font-size:18.4px;letter-spacing:0.000px;color:#5aad8d;">+</span>
<span class="t" style="left:957.25px;top:911.20px;font-size:17.8px;letter-spacing:2.250px;color:#93928e;">15</span>
<span class="t" style="left:992.00px;top:911.00px;font-size:18.4px;letter-spacing:0.000px;color:#5aad8d;">+</span>
<span class="t" style="left:957.25px;top:939.95px;font-size:17.8px;letter-spacing:2.250px;color:#93928e;">16</span>
<span class="t" style="left:957.25px;top:968.70px;font-size:17.8px;letter-spacing:2.500px;color:#93928e;">17</span>
<span class="t" style="left:957.25px;top:997.45px;font-size:17.8px;letter-spacing:2.250px;color:#93928e;">18</span>
</section>

</div>
</body>
</html>
